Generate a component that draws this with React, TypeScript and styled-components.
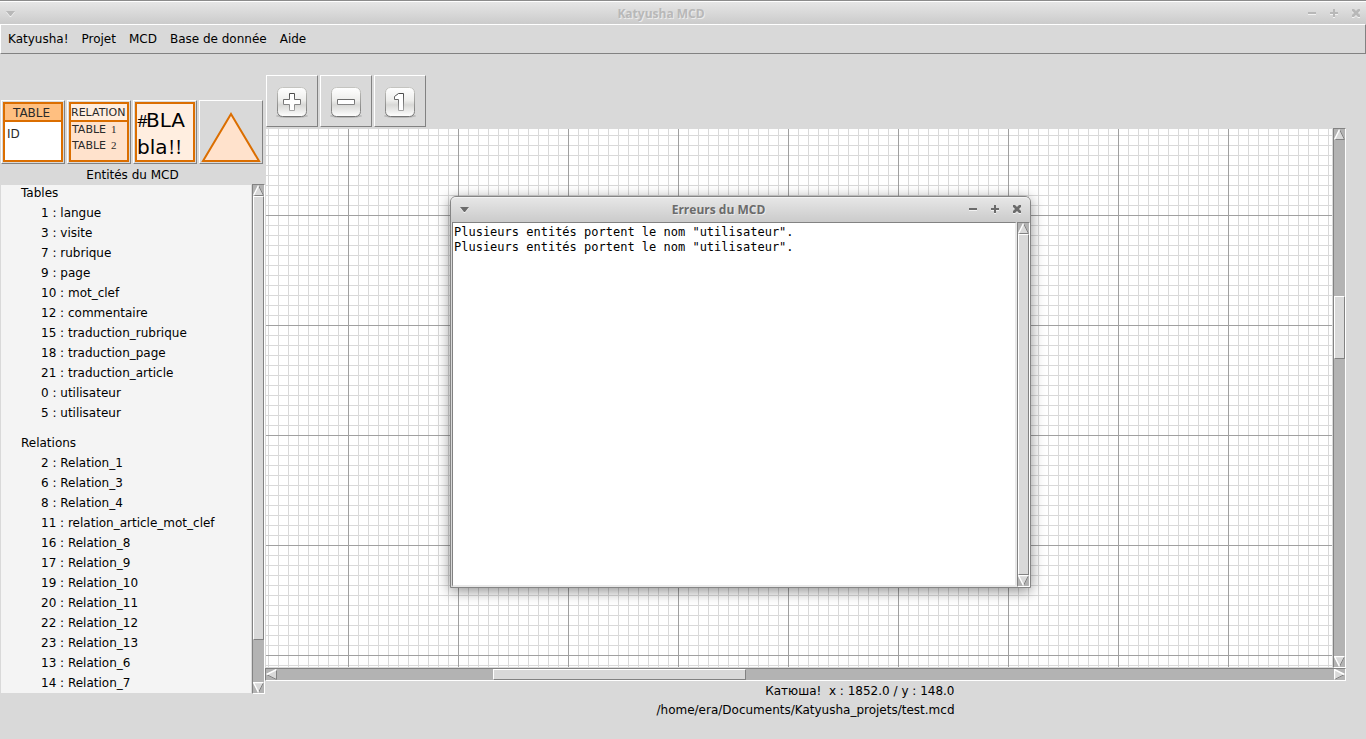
import React from "react";
import styled, { createGlobalStyle, css } from "styled-components";

const FACE = "#d9d9d9";
const SHADE = "#828282";
const TROUGH = "#b3b3b3";
const ORANGE = "#db6e00";
const SANS = '"DejaVu Sans", sans-serif';

const GlobalStyle = createGlobalStyle`
  *, *::before, *::after { box-sizing: border-box; }
  body { margin: 0; background: ${FACE}; }
  button { margin: 0; padding: 0; border: 0; background: none; color: inherit; font: inherit; }
  svg { display: block; }
  ul { list-style: none; margin: 0; padding: 0; }
`;

const raised = css`
  border: 1px solid;
  border-color: #fff ${SHADE} ${SHADE} #fff;
`;

const sunken = css`
  border: 1px solid;
  border-color: ${SHADE} #fff #fff ${SHADE};
`;

const Page = styled.div`
  display: flex;
  flex-direction: column;
  min-height: 100vh;
  background: ${FACE};
  color: #000;
  font: 12px/15px ${SANS};
`;

/* ---------- window title bars ---------- */

const TitleBar = styled.header<{ $active?: boolean }>`
  display: flex;
  align-items: center;
  height: ${(p) => (p.$active ? 25 : 23)}px;
  padding: ${(p) => (p.$active ? "0 4px" : "2px 1px 0")};
  border-top: 1px solid ${(p) => (p.$active ? "#f4f4f4" : "#fff")};
  border-radius: ${(p) => (p.$active ? "5px 5px 0 0" : "0")};
  background: linear-gradient(#e6e6e6, #cbcbcb);
  color: ${(p) => (p.$active ? "#6b6b6b" : "#b8b8b8")};
`;

const TitleFrame = styled.div`
  border-top: 1px solid #8c8c8c;
`;

const Title = styled.h1`
  flex: 1;
  margin: 0;
  text-align: center;
  font: bold 12px/16px "Open Sans", sans-serif;
  text-shadow: 1px 1px 0 #ebebeb;
`;

const TitleButton = styled.button`
  display: grid;
  place-items: center;
  width: 18px;
  height: 18px;
`;

const TitleControls = styled.div`
  display: flex;
  gap: 4px;
`;

const TITLE_SHAPES = {
  menu: "M2 3h9l-4 5h-1z",
  min: "M2 4h8v2h-8z",
  max: "M5 1h2v3h3v2h-3v3h-2v-3h-3v-2h3z",
  close: "M2 1h2l2 2 2-2h2v2l-2 2 2 2v2h-2l-2-2-2 2h-2v-2l2-2-2-2z",
};

function TitleIcon({ shape }: { shape: keyof typeof TITLE_SHAPES }) {
  return (
    <svg width="12" height="12" viewBox="0 0 12 12" aria-hidden="true">
      <path d={TITLE_SHAPES[shape]} fill="#f2f2f2" transform="translate(0 1)" />
      <path d={TITLE_SHAPES[shape]} fill="currentColor" />
    </svg>
  );
}

function WindowTitle({ text, active }: { text: string; active?: boolean }) {
  return (
    <TitleBar $active={active}>
      <TitleButton aria-label="Menu de la fenêtre"><TitleIcon shape="menu" /></TitleButton>
      <Title>{text}</Title>
      <TitleControls>
        <TitleButton aria-label="Réduire"><TitleIcon shape="min" /></TitleButton>
        <TitleButton aria-label="Agrandir"><TitleIcon shape="max" /></TitleButton>
        <TitleButton aria-label="Fermer"><TitleIcon shape="close" /></TitleButton>
      </TitleControls>
    </TitleBar>
  );
}

/* ---------- menu bar ---------- */

const MenuBar = styled.nav`
  ${raised}
  display: flex;
  align-items: center;
  gap: 13px;
  height: 30px;
  padding: 1px 7px 0;
`;

/* ---------- scroll bars ---------- */

const Bar = styled.div<{ $horizontal?: boolean }>`
  ${sunken}
  display: flex;
  flex: none;
  flex-direction: ${(p) => (p.$horizontal ? "row" : "column")};
  ${(p) => (p.$horizontal ? "height" : "width")}: 13px;
  background: ${TROUGH};
`;

const Arrow = styled.button`
  flex: none;
  width: 11px;
  height: 11px;
`;

const Track = styled.div<{ $share: number }>`
  flex: ${(p) => p.$share} 1 0;
`;

const Thumb = styled(Track)`
  ${raised}
  background: ${FACE};
`;

type Direction = "up" | "down" | "left" | "right";

const ARROWS: Record<Direction, { fill: string; light: string; dark: string }> = {
  up: { fill: "M5.5 0 11 11H0z", light: "M.5 10.5 5.5.5", dark: "M5.5.5 10.5 10.5H.5" },
  down: { fill: "M0 0H11L5.5 11z", light: "M10.5.5H.5L5.5 10.5", dark: "M5.5 10.5 10.5.5" },
  left: { fill: "M0 5.5 11 0V11z", light: "M.5 5.5 10.5.5", dark: "M10.5.5V10.5L.5 5.5" },
  right: { fill: "M0 0 11 5.5 0 11z", light: "M.5 10.5V.5L10.5 5.5", dark: "M10.5 5.5.5 10.5" },
};

function ArrowButton({ to, label }: { to: Direction; label: string }) {
  const a = ARROWS[to];
  return (
    <Arrow aria-label={label}>
      <svg width="11" height="11" fill="none">
        <path d={a.fill} fill={FACE} />
        <path d={a.dark} stroke={SHADE} />
        <path d={a.light} stroke="#fff" strokeWidth="1.4" />
      </svg>
    </Arrow>
  );
}

function ScrollBar(props: { horizontal?: boolean; before: number; size: number; after: number }) {
  const { horizontal, before, size, after } = props;
  return (
    <Bar $horizontal={horizontal}>
      <ArrowButton to={horizontal ? "left" : "up"} label="Défiler en arrière" />
      <Track $share={before} />
      <Thumb $share={size} />
      <Track $share={after} />
      <ArrowButton to={horizontal ? "right" : "down"} label="Défiler en avant" />
    </Bar>
  );
}

/* ---------- entity side bar ---------- */

const Main = styled.main`
  display: flex;
  flex: 1;
`;

const SideBar = styled.aside`
  display: flex;
  flex-direction: column;
  flex: none;
  width: 265px;
  padding-top: 46px;
`;

const Palette = styled.div`
  display: flex;
  gap: 2px;
  padding-left: 1px;
`;

const PaletteButton = styled.button`
  ${raised}
  width: 64px;
  height: 64px;
  padding: 1px;
  overflow: hidden;
`;

const SideTitle = styled.h2`
  margin: 4px 0 1px;
  text-align: center;
  font: inherit;
`;

const EntityPane = styled.div`
  display: flex;
`;

const EntityList = styled.div`
  flex: 1;
  margin: 1px;
  padding: 1px 0 2px 20px;
  background: #f4f4f4;
`;

const Group = styled.section`
  & + & { margin-top: 15px; }
`;

const GroupTitle = styled.h3`
  margin: 0;
  font: inherit;
`;

const Entity = styled.li`
  margin-top: 5px;
  padding-left: 20px;
`;

const tables = [
  "1 : langue", "3 : visite", "7 : rubrique", "9 : page", "10 : mot_clef",
  "12 : commentaire", "15 : traduction_rubrique", "18 : traduction_page",
  "21 : traduction_article", "0 : utilisateur", "5 : utilisateur",
];

const relations = [
  "2 : Relation_1", "6 : Relation_3", "8 : Relation_4", "11 : relation_article_mot_clef",
  "16 : Relation_8", "17 : Relation_9", "19 : Relation_10", "20 : Relation_11",
  "22 : Relation_12", "23 : Relation_13", "13 : Relation_6", "14 : Relation_7",
];

function EntityGroup({ title, items }: { title: string; items: string[] }) {
  return (
    <Group>
      <GroupTitle>{title}</GroupTitle>
      <ul>{items.map((item) => <Entity key={item}>{item}</Entity>)}</ul>
    </Group>
  );
}

const Drawing = styled.svg`
  font-family: ${SANS};
  font-size: 11px;
  fill: #2a2a2a;
`;

function Palettes() {
  return (
    <Palette>
      <PaletteButton aria-label="Table">
        <Drawing width="60" height="60">
          <rect x="1" y="1" width="58" height="58" fill="#fff" stroke={ORANGE} strokeWidth="2" />
          <path d="M2 2h56v16H2z" fill="#ffbf80" />
          <path d="M0 19h60" stroke={ORANGE} strokeWidth="2" />
          <g fontSize="12">
            <text x="10" y="15">TABLE</text>
            <text x="4" y="36">ID</text>
          </g>
        </Drawing>
      </PaletteButton>
      <PaletteButton aria-label="Relation">
        <Drawing width="60" height="60">
          <rect x="1" y="1" width="58" height="58" fill="#ffe2cc" stroke={ORANGE} strokeWidth="2" />
          <path d="M2 2h56v16H2z" fill="#ffeee0" />
          <path d="M0 19h60" stroke={ORANGE} strokeWidth="2" />
          <text x="2" y="14">RELATION</text>
          <text x="3" y="31">TABLE <tspan fontFamily="Liberation Serif" x="42">1</tspan></text>
          <text x="3" y="47">TABLE <tspan fontFamily="Liberation Serif" x="42">2</tspan></text>
        </Drawing>
      </PaletteButton>
      <PaletteButton aria-label="Étiquette">
        <Drawing width="60" height="60">
          <rect x="1" y="1" width="58" height="58" fill="#ffeee0" stroke={ORANGE} strokeWidth="2" />
          <g fontSize="20" fill="#000">
            <text x="2" y="25"><tspan fontFamily="Open Sans" fontSize="17">#</tspan><tspan x="11">BLA</tspan></text>
            <text x="2" y="52">bla<tspan fontFamily="Open Sans" x="34">!</tspan><tspan fontFamily="Open Sans" x="41">!</tspan></text>
          </g>
        </Drawing>
      </PaletteButton>
      <PaletteButton aria-label="Héritage">
        <Drawing width="60" height="60">
          <path d="M30 12 58 59H2z" fill="#ffe2cc" stroke={ORANGE} strokeWidth="2" />
        </Drawing>
      </PaletteButton>
    </Palette>
  );
}

/* ---------- diagram area ---------- */

const Workspace = styled.section`
  display: flex;
  flex: 1;
  flex-direction: column;
  min-width: 0;
  padding: 21px 20px 21px 0;
`;

const ToolBar = styled.div`
  display: flex;
  gap: 2px;
  padding: 0 1px 1px;
`;

const ToolButton = styled.button`
  ${raised}
  display: grid;
  place-items: center;
  width: 52px;
  height: 52px;
`;

const CanvasRow = styled.div`
  display: flex;
  flex: 1;
`;

const Canvas = styled.div`
  flex: 1;
  margin: 1px;
  background-color: #fff;
  background-image:
    linear-gradient(90deg, #a0a0a0 1px, transparent 1px),
    linear-gradient(#a0a0a0 1px, transparent 1px),
    linear-gradient(90deg, ${FACE} 1px, transparent 1px),
    linear-gradient(${FACE} 1px, transparent 1px);
  background-size: 110px 110px, 110px 110px, 10px 10px, 10px 10px;
  background-position: 82px 0, 0 86px, 2px 0, 0 6px;
`;

const Status = styled.footer`
  display: grid;
  align-self: center;
  gap: 4px;
  margin-top: 3px;
  text-align: right;
  white-space: pre;
`;

const GLYPHS = {
  plus: "M12.5 6.5h5v6h6v5h-6v6h-5v-6h-6v-5h6z",
  minus: "M6.5 12.5h17v5h-17z",
  one: "M13.5 6.5h5v17h-5v-11h-4v-3z",
};

function ZoomIcon({ glyph }: { glyph: keyof typeof GLYPHS }) {
  return (
    <svg width="34" height="34" viewBox="-2 -3 34 34">
      <defs>
        <linearGradient id={`face-${glyph}`} x2="0" y2="1">
          <stop offset="0" stopColor="#fff" />
          <stop offset=".45" stopColor="#ededeb" />
          <stop offset=".6" stopColor="#d8d8d6" />
          <stop offset="1" stopColor="#fff" />
        </linearGradient>
        <linearGradient id={`edge-${glyph}`} x2="0" y2="1">
          <stop offset="0" stopColor="#c4c4c0" />
          <stop offset="1" stopColor="#757575" />
        </linearGradient>
        <linearGradient id={`line-${glyph}`} gradientUnits="userSpaceOnUse" x1="0" y1="6" x2="0" y2="24">
          <stop offset="0" stopColor="#484848" />
          <stop offset="1" stopColor="#a8a8a8" />
        </linearGradient>
      </defs>
      <ellipse cx="15" cy="29" rx="16" ry="2" fill="#000" opacity=".15" />
      <rect x=".5" y=".5" width="29" height="29" rx="5" fill={`url(#face-${glyph})`} stroke={`url(#edge-${glyph})`} />
      <path d={GLYPHS[glyph]} fill="#fff" stroke={`url(#line-${glyph})`} />
    </svg>
  );
}

/* ---------- error window ---------- */

const Dialog = styled.div`
  position: absolute;
  left: 450px;
  top: 196px;
  display: flex;
  flex-direction: column;
  width: 581px;
  height: 392px;
  border: 1px solid #858585;
  border-radius: 6px 6px 0 0;
  background: ${FACE};
  box-shadow: 0 3px 14px rgba(0, 0, 0, 0.45);
`;

const DialogBody = styled.div`
  display: flex;
  flex: 1;
  padding-left: 1px;
`;

const Messages = styled.textarea`
  flex: 1;
  min-width: 0;
  margin: 0;
  padding: 2px 1px;
  border: solid;
  border-width: 1px 2px 2px 1px;
  border-color: ${SHADE} #e8e8e8 #e8e8e8 ${SHADE};
  border-radius: 0;
  outline: 0;
  resize: none;
  overflow: hidden;
  background: #fff;
  color: #000;
  font: 12px/15px "DejaVu Sans Mono", monospace;
`;

const errors = [
  'Plusieurs entités portent le nom "utilisateur".',
  'Plusieurs entités portent le nom "utilisateur".',
].join("\n");

export default function App() {
  return (
    <Page>
      <GlobalStyle />
      <TitleFrame><WindowTitle text="Katyusha MCD" /></TitleFrame>
      <MenuBar>
        {["Katyusha!", "Projet", "MCD", "Base de donnée", "Aide"].map((name) => (
          <button key={name}>{name}</button>
        ))}
      </MenuBar>
      <Main>
        <SideBar>
          <Palettes />
          <SideTitle>Entités du MCD</SideTitle>
          <EntityPane>
            <EntityList>
              <EntityGroup title="Tables" items={tables} />
              <EntityGroup title="Relations" items={relations} />
            </EntityList>
            <ScrollBar before={0} size={441} after={42} />
          </EntityPane>
        </SideBar>
        <Workspace>
          <ToolBar>
            <ToolButton aria-label="Zoom avant"><ZoomIcon glyph="plus" /></ToolButton>
            <ToolButton aria-label="Zoom arrière"><ZoomIcon glyph="minus" /></ToolButton>
            <ToolButton aria-label="Taille réelle"><ZoomIcon glyph="one" /></ToolButton>
          </ToolBar>
          <CanvasRow>
            <Canvas />
            <ScrollBar before={157} size={61} after={298} />
          </CanvasRow>
          <ScrollBar horizontal before={216} size={251} after={588} />
          <Status>
            <span>Катюша!  x : 1852.0 / y : 148.0</span>
            <span>/home/era/Documents/Katyusha_projets/test.mcd</span>
          </Status>
        </Workspace>
      </Main>
      <Dialog role="dialog" aria-label="Erreurs du MCD">
        <WindowTitle text="Erreurs du MCD" active />
        <DialogBody>
          <Messages aria-label="Erreurs" readOnly defaultValue={errors} />
          <ScrollBar before={0} size={338} after={0} />
        </DialogBody>
      </Dialog>
    </Page>
  );
}
